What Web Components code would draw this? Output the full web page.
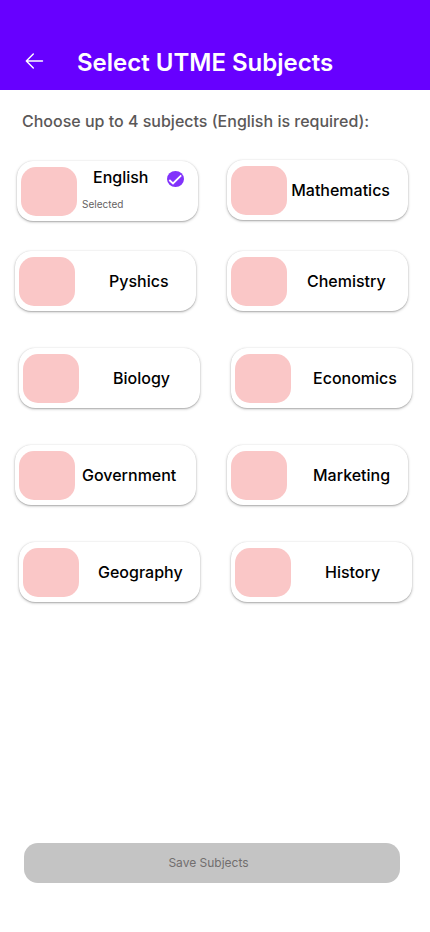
<!DOCTYPE html>
<html lang="en">
<head>
<meta charset="utf-8">
<title>Select UTME Subjects</title>
<style>
html,body{margin:0;background:#fff;font-family:Inter,"Liberation Sans",sans-serif}
</style>
</head>
<body>
<subjects-page></subjects-page>
<script>
class AppHeader extends HTMLElement{
  constructor(){
    super();
    this.attachShadow({mode:'open'}).innerHTML=`
<style>
:host{display:flex;height:90px;box-sizing:border-box;padding:34px 0 0 25px;background:#6700ff;color:#fff;align-items:center}
svg{width:19px;height:18px;display:block;margin-top:-3px}
h1{margin:2px 0 0 33px;font-size:24px;line-height:30px;font-weight:600;white-space:nowrap}
</style>
<svg viewBox="0 0 19 18" fill="none" stroke="#fff" stroke-width="1.4" stroke-linecap="round" stroke-linejoin="round"><path d="M17.5 9H1.3M8.3 2L1.3 9l7 7"/></svg>
<h1><slot></slot></h1>`;
  }
}
customElements.define('app-header',AppHeader);

class CheckBadge extends HTMLElement{
  constructor(){
    super();
    this.attachShadow({mode:'open'}).innerHTML=`
<style>:host{display:block;width:17px;height:16px}svg{display:block}</style>
<svg width="17" height="16" viewBox="0 0 17 16"><ellipse cx="8.5" cy="8" rx="8.5" ry="8" fill="#8132fb"/><path d="M2.3 9l3.7 3.5L14.2 4.4" fill="none" stroke="#fff" stroke-width="1.8"/></svg>`;
  }
}
customElements.define('check-badge',CheckBadge);

class SubjectCard extends HTMLElement{
  constructor(){
    super();
    this.attachShadow({mode:'open'}).innerHTML=`
<style>
:host{display:flex;box-sizing:border-box;width:181px;height:60px;padding:6px 0 0 4px;border-radius:16px;background:#fff;box-shadow:0 1px 3px rgba(0,0,0,.28),0 1px 1px rgba(0,0,0,.1),0 0 1px rgba(0,0,0,.12);color:#000;position:relative}
.tile{flex:none;width:56px;height:49px;border-radius:15px;background:#fac7c7}
.text{display:flex;flex-direction:column;height:48px;justify-content:center}
.name{font-size:16px;line-height:20px;font-weight:500;white-space:nowrap;padding-left:var(--indent,5px)}
:host([selected]) .text{justify-content:flex-start}
::slotted([slot=note]){font-size:10px;line-height:12px;color:#656262;margin:11px 0 0 5px}
::slotted([slot=badge]){position:absolute;left:150px;top:10px}
</style>
<div class="tile"></div><div class="text"><div class="name"><slot></slot></div><slot name="note"></slot></div><slot name="badge"></slot>`;
  }
}
customElements.define('subject-card',SubjectCard);

class SubjectRow extends HTMLElement{
  constructor(){
    super();
    this.attachShadow({mode:'open'}).innerHTML=`
<style>:host{display:flex;align-items:flex-start;gap:31px;padding-left:15px}:host([shifted]){padding-left:19px}:host([lead]){padding-left:17px;gap:29px;margin-bottom:-7px}:host([lead]) ::slotted([selected]){margin-top:1px}</style><slot></slot>`;
  }
}
customElements.define('subject-row',SubjectRow);

class SaveButton extends HTMLElement{
  constructor(){
    super();
    this.attachShadow({mode:'open'}).innerHTML=`
<style>:host{display:block}button{display:block;width:100%;height:40px;border:0;padding:0 7px 0 0;border-radius:14px;background:#c4c4c4;color:#716e6e;font:400 12px/16px Inter,"Liberation Sans",sans-serif}</style><button type="button" disabled><slot></slot></button>`;
  }
}
customElements.define('save-button',SaveButton);

class SubjectsPage extends HTMLElement{
  constructor(){
    super();
    this.attachShadow({mode:'open'}).innerHTML=`
<style>
:host{display:flex;flex-direction:column;height:932px;background:#fff}
p{margin:0;padding:21px 0 0 22px;font-size:16px;line-height:20px;font-weight:500;color:#5b5858;white-space:nowrap}
main{display:flex;flex-direction:column;gap:37px;padding-top:29px;flex:1}
save-button{margin:0 30px 49px 24px}
</style>
<app-header>Select UTME Subjects</app-header>
<p>Choose up to 4 subjects (English is required):</p>
<main>
<subject-row lead>
<subject-card selected style="--indent:16px">English<span slot="note">Selected</span><check-badge slot="badge"></check-badge></subject-card>
<subject-card style="--indent:4.2px">Mathematics</subject-card>
</subject-row>
<subject-row><subject-card style="--indent:34px">Pyshics</subject-card><subject-card style="--indent:20px">Chemistry</subject-card></subject-row>
<subject-row shifted><subject-card style="--indent:34px">Biology</subject-card><subject-card style="--indent:22px">Economics</subject-card></subject-row>
<subject-row><subject-card style="--indent:7px">Government</subject-card><subject-card style="--indent:26px">Marketing</subject-card></subject-row>
<subject-row shifted><subject-card style="--indent:19px">Geography</subject-card><subject-card style="--indent:34px">History</subject-card></subject-row>
</main>
<save-button>Save Subjects</save-button>`;
  }
}
customElements.define('subjects-page',SubjectsPage);
</script>
</body>
</html>
